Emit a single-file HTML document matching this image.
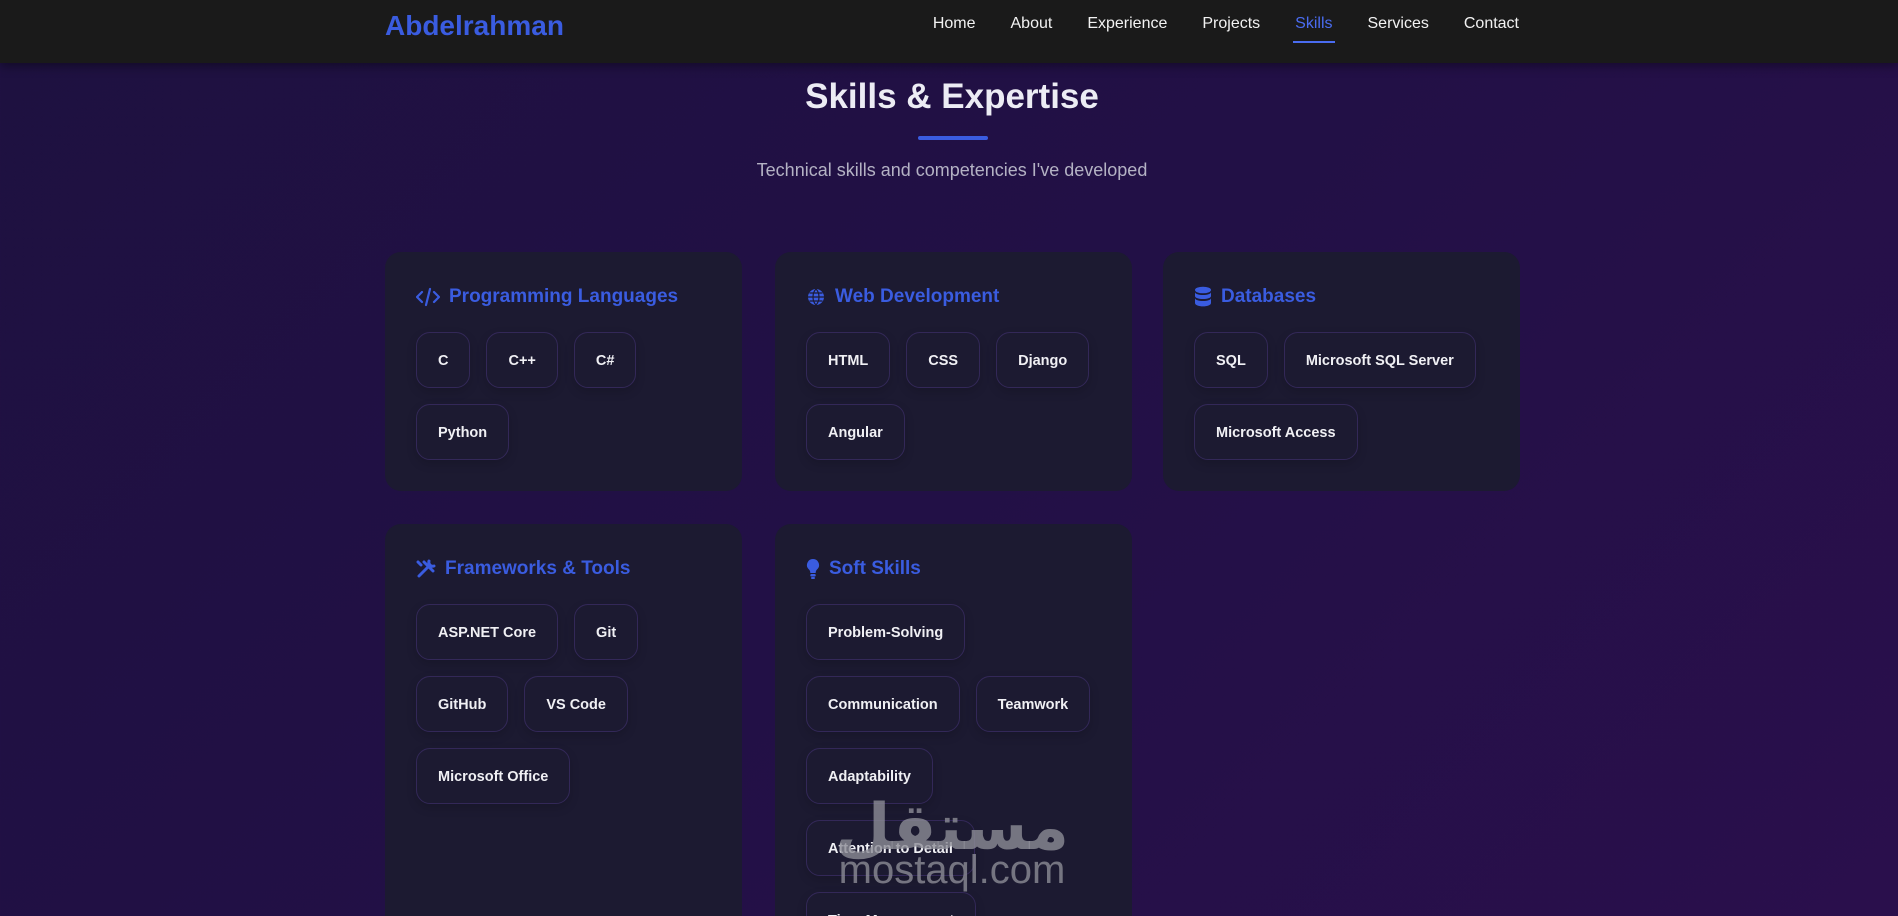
<!DOCTYPE html>
<html><head><meta charset="utf-8"><style>
*{margin:0;padding:0;box-sizing:border-box}
html,body{width:1898px;height:916px;overflow:hidden}
body{font-family:"Liberation Sans",sans-serif;background:linear-gradient(135deg,#1e1140 0%,#221046 50%,#2a0f4c 100%);color:#fff;position:relative}
nav{position:absolute;left:0;top:0;width:1898px;height:63px;background:#1a1a1a;box-shadow:0 3px 10px rgba(0,0,0,.4)}
.logo{position:absolute;left:385px;top:10px;font-size:28px;font-weight:bold;color:#3a5ce0}
.links{position:absolute;right:379px;top:15px;display:flex;gap:35px;font-size:16px}
.links span{color:#f2f2f2;position:relative}
.links .act{color:#4a6cf0}
.links .act:after{content:"";position:absolute;left:-2px;right:-2px;top:26px;height:2px;background:#4a6cf0}
h1{position:absolute;left:0;width:1904px;text-align:center;top:77px;font-size:35px;font-weight:bold;color:#ececf4}
.bar{position:absolute;left:918px;top:136px;width:70px;height:4px;background:#3a5ce0;border-radius:2px}
.sub{position:absolute;left:0;width:1904px;text-align:center;top:160px;font-size:18px;color:#b4b2c4}
.card{position:absolute;width:357px;background:#1c1a31;border-radius:16px;padding:31px;overflow:hidden}
.card h3{font-size:19px;font-weight:bold;color:#3a5ce0;height:28px;display:flex;align-items:center;gap:9px;margin-bottom:21px}
.pills{font-size:0;margin-right:-20px}
.pill{display:inline-block;vertical-align:top;margin:0 16px 16px 0;height:56px;line-height:56px;padding:0 21px;border:1px solid rgba(110,80,190,.28);border-radius:14px;font-size:14.5px;font-weight:bold;color:#f0f0f4;box-shadow:0 4px 10px rgba(0,0,0,.15)}
.wm{position:absolute;left:827px;top:790px;width:250px;color:rgba(140,140,150,.8);font-weight:bold;text-align:center;line-height:1}
</style></head><body>
<nav><div class="logo">Abdelrahman</div>
<div class="links"><span>Home</span><span>About</span><span>Experience</span><span>Projects</span><span class="act">Skills</span><span>Services</span><span>Contact</span></div></nav>
<h1>Skills &amp; Expertise</h1>
<div class="bar"></div>
<div class="sub">Technical skills and competencies I've developed</div>

<div class="card" style="left:385px;top:252px;height:239px">
<h3><svg width="24" height="20" viewBox="0 0 24 20" fill="none" stroke="#3a5ce0" stroke-width="2.2" stroke-linecap="round"><path d="M6 5 1 10l5 5M18 5l5 5-5 5M14 2 10 18"/></svg>Programming Languages</h3>
<div class="pills"><div class="pill">C</div><div class="pill">C++</div><div class="pill">C#</div><br><div class="pill">Python</div></div></div>

<div class="card" style="left:775px;top:252px;height:239px">
<h3><svg width="20" height="20" viewBox="0 0 20 20" fill="none" stroke="#3a5ce0" stroke-width="2"><circle cx="10" cy="10" r="8" fill="#3a5ce0" stroke="none"/><path d="M2 10h16M10 2c-4 4-4 12 0 16M10 2c4 4 4 12 0 16M3.5 6h13M3.5 14h13" stroke="#1c1a31" stroke-width="1.2"/></svg>Web Development</h3>
<div class="pills"><div class="pill">HTML</div><div class="pill">CSS</div><div class="pill">Django</div><br><div class="pill">Angular</div></div></div>

<div class="card" style="left:1163px;top:252px;height:239px">
<h3><svg width="18" height="22" viewBox="0 0 18 22"><ellipse cx="9" cy="4" rx="8" ry="3.3" fill="#3a5ce0"/><path d="M1 6c0 4 16 4 16 0v4c0 4-16 4-16 0zM1 12c0 4 16 4 16 0v5c0 4.5-16 4.5-16 0z" fill="#3a5ce0"/></svg>Databases</h3>
<div class="pills"><div class="pill">SQL</div><div class="pill">Microsoft SQL Server</div><br><div class="pill">Microsoft Access</div></div></div>

<div class="card" style="left:385px;top:524px;height:392px;border-radius:16px 16px 0 0">
<h3><svg width="20" height="20" viewBox="0 0 20 20" fill="none" stroke="#3a5ce0" stroke-width="3" stroke-linecap="round"><path d="M3 17 12 8M8 3 17 12M13 2a4 4 0 0 0 5 5M2 3l3 3"/></svg>Frameworks &amp; Tools</h3>
<div class="pills"><div class="pill">ASP.NET Core</div><div class="pill">Git</div><br><div class="pill">GitHub</div><div class="pill">VS Code</div><br><div class="pill">Microsoft Office</div></div></div>

<div class="card" style="left:775px;top:524px;height:392px;border-radius:16px 16px 0 0">
<h3><svg width="14" height="22" viewBox="0 0 14 22"><path d="M7 1a6 6 0 0 0-4 10.5c1 1 1.3 2 1.3 3.5h5.4c0-1.5.3-2.5 1.3-3.5A6 6 0 0 0 7 1z" fill="#3a5ce0"/><rect x="4.3" y="16" width="5.4" height="2.5" rx="1" fill="#3a5ce0"/><rect x="5" y="19" width="4" height="2" rx="1" fill="#3a5ce0"/></svg>Soft Skills</h3>
<div class="pills"><div class="pill">Problem-Solving</div><br><div class="pill">Communication</div><div class="pill">Teamwork</div><br><div class="pill">Adaptability</div><br><div class="pill">Attention to Detail</div><br><div class="pill">Time Management</div></div></div>

<div class="wm"><div style="font-family:'Noto Sans CJK SC','DejaVu Sans',sans-serif;font-size:64px;direction:rtl">مستقل</div><div style="font-size:40px;font-weight:normal;margin-top:-4px">mostaql.com</div></div>
</body></html>
